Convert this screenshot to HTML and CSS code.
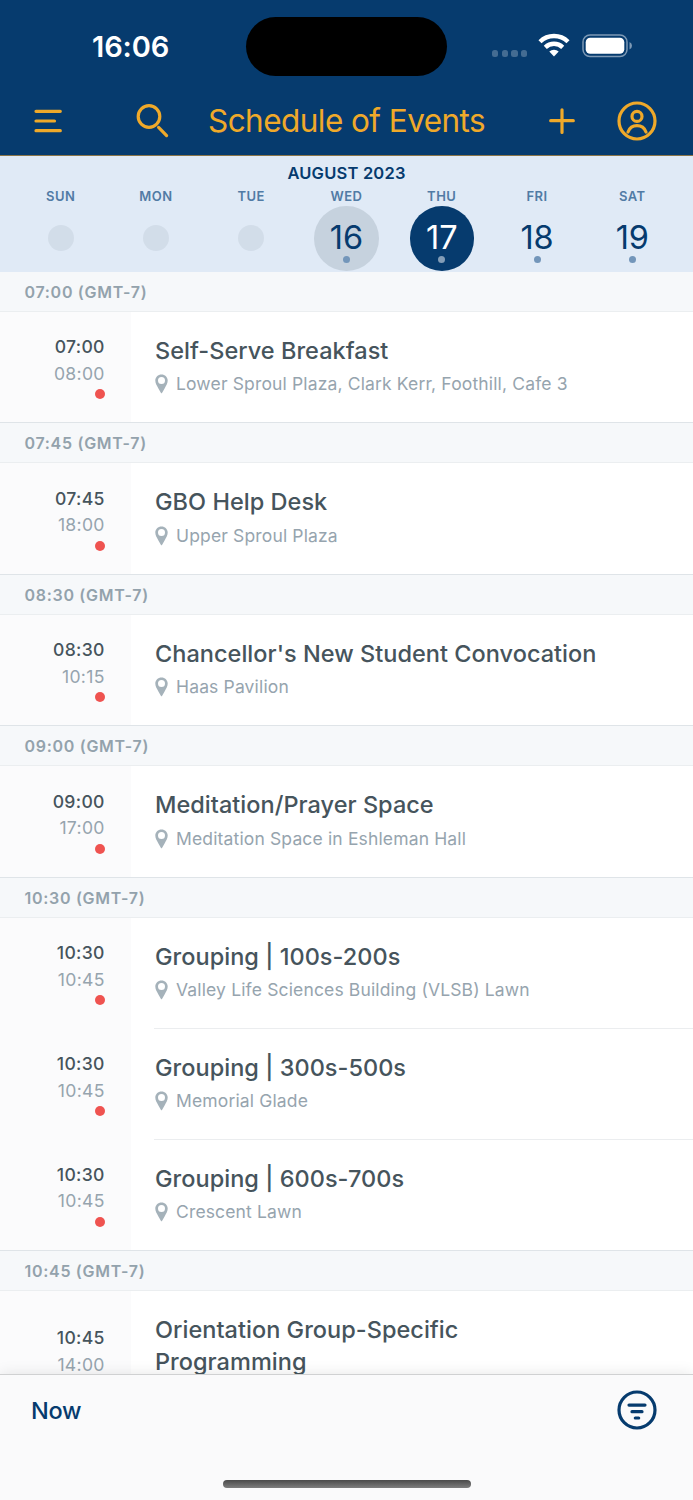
FILE: index.html
```html
<!DOCTYPE html>
<html lang="en">
    <head>
        <meta charset="utf-8">
        <title>Schedule of Events</title>
        <link rel="stylesheet" href="styles.css">
    </head>
    <body>
        <svg class="defs" width="0" height="0">
            <symbol id="pin" viewBox="0 0 14 20">
                <path fill-rule="evenodd" d="M6.500.5C3 .5.300 3.200.300 6.600c0 3 1.500 5 3.100 7.800L6 18.900q.5.600 1 0L9.600 14.400c1.600-2.800 3.100-4.800 3.100-7.800C12.700 3.200 10 .5 6.500.5zM6.500 3a3.500 3.500 0 1 1 0 7a3.500 3.500 0 0 1 0-7z"/>
            </symbol>
        </svg>

        <header id="top">
            <div class="status">
                <span class="clock">16:06</span>
                <span class="island"></span>
                <span class="signal"><i></i><i></i><i></i><i></i></span>
                <svg class="wifi" width="32" height="24" viewBox="0 0 32 24">
                    <g fill="none" stroke="#fff" stroke-width="4.400">
                        <path d="M2 8.700a20 20 0 0 1 28 0"/>
                        <path d="M7.300 14.300a12.500 12.500 0 0 1 17.400 0"/>
                    </g>
                    <path fill="#fff" d="M11.300 18.500a7 7 0 0 1 9.400 0L16 23.400z"/>
                </svg>
                <svg class="battery" width="52" height="24" viewBox="0 0 52 24">
                    <rect x="1" y="1" width="44" height="21.500" rx="7" fill="none" stroke="#7d99b5" stroke-width="1.500"/>
                    <rect x="3.700" y="3.700" width="38.600" height="16" rx="4.500" fill="#fff"/>
                    <path d="M47.500 8v7.500q2.500-1.200 2.500-3.750t-2.500-3.750z" fill="#7d99b5"/>
                </svg>
            </div>
            <nav class="bar">
                <svg class="menu" width="28" height="26" viewBox="0 0 28 26">
                    <path d="M2 3.300h24.300M2 13h18.500M2 22.700h24.300"/>
                </svg>
                <svg class="search" width="34" height="34" viewBox="0 0 34 34">
                    <circle cx="13" cy="12.500" r="10.800"/>
                    <path d="M22.600 23.400l8 8.200"/>
                </svg>
                <h1>Schedule of Events</h1>
                <svg class="plus" width="28" height="28" viewBox="0 0 28 28">
                    <path d="M14 2.800v22.600M2.700 13.700h22.600"/>
                </svg>
                <svg class="user" width="40" height="40" viewBox="0 0 40 40">
                    <circle cx="20" cy="20" r="18"/>
                    <circle cx="20" cy="15.400" r="5"/>
                    <path d="M11 31c1.500-4 5-6.300 9-6.300s7.500 2.300 9 6.300"/>
                </svg>
            </nav>
        </header>

        <section id="calendar">
            <h2>AUGUST 2023</h2>
            <div class="days">
                <div class="day"><b>SUN</b><span class="empty"></span></div>
                <div class="day"><b>MON</b><span class="empty"></span></div>
                <div class="day"><b>TUE</b><span class="empty"></span></div>
                <div class="day"><b>WED</b><span class="num today">16</span></div>
                <div class="day"><b>THU</b><span class="num selected">17</span></div>
                <div class="day"><b>FRI</b><span class="num">18</span></div>
                <div class="day"><b>SAT</b><span class="num">19</span></div>
            </div>
        </section>

        <main id="events">
            <h3>07:00 (GMT-7)</h3>
            <div class="event">
                <div class="time"><b>07:00</b><span>08:00</span><i></i></div>
                <div class="info">
                    <h4>Self-Serve Breakfast</h4>
                    <p><svg width="14" height="20"><use href="#pin"/></svg>Lower Sproul Plaza, Clark Kerr, Foothill, Cafe 3</p>
                </div>
            </div>

            <h3>07:45 (GMT-7)</h3>
            <div class="event">
                <div class="time"><b>07:45</b><span>18:00</span><i></i></div>
                <div class="info">
                    <h4>GBO Help Desk</h4>
                    <p><svg width="14" height="20"><use href="#pin"/></svg>Upper Sproul Plaza</p>
                </div>
            </div>

            <h3>08:30 (GMT-7)</h3>
            <div class="event">
                <div class="time"><b>08:30</b><span>10:15</span><i></i></div>
                <div class="info">
                    <h4>Chancellor's New Student Convocation</h4>
                    <p><svg width="14" height="20"><use href="#pin"/></svg>Haas Pavilion</p>
                </div>
            </div>

            <h3>09:00 (GMT-7)</h3>
            <div class="event">
                <div class="time"><b>09:00</b><span>17:00</span><i></i></div>
                <div class="info">
                    <h4>Meditation/Prayer Space</h4>
                    <p><svg width="14" height="20"><use href="#pin"/></svg>Meditation Space in Eshleman Hall</p>
                </div>
            </div>

            <h3>10:30 (GMT-7)</h3>
            <div class="event">
                <div class="time"><b>10:30</b><span>10:45</span><i></i></div>
                <div class="info">
                    <h4>Grouping | 100s-200s</h4>
                    <p><svg width="14" height="20"><use href="#pin"/></svg>Valley Life Sciences Building (VLSB) Lawn</p>
                </div>
            </div>
            <div class="event">
                <div class="time"><b>10:30</b><span>10:45</span><i></i></div>
                <div class="info">
                    <h4>Grouping | 300s-500s</h4>
                    <p><svg width="14" height="20"><use href="#pin"/></svg>Memorial Glade</p>
                </div>
            </div>
            <div class="event">
                <div class="time"><b>10:30</b><span>10:45</span><i></i></div>
                <div class="info">
                    <h4>Grouping | 600s-700s</h4>
                    <p><svg width="14" height="20"><use href="#pin"/></svg>Crescent Lawn</p>
                </div>
            </div>

            <h3>10:45 (GMT-7)</h3>
            <div class="event tall">
                <div class="time"><b>10:45</b><span>14:00</span></div>
                <div class="info">
                    <h4>Orientation Group-Specific<br>Programming</h4>
                </div>
            </div>
        </main>

        <footer id="bottom">
            <div class="tools">
                <a class="now">Now</a>
                <svg class="filter" width="40" height="40" viewBox="0 0 40 40">
                    <circle cx="20" cy="20" r="18"/>
                    <path d="M12 15.100h16M15 21.700h10M18.300 28h3.400"/>
                </svg>
            </div>
            <div class="home"></div>
        </footer>
    </body>
</html>
```
FILE: styles.css
```css
*{
    box-sizing: border-box;
}
body{
    display: flex;
    flex-direction: column;
    width: 693px;
    height: 1500px;
    margin: 0;
    overflow: hidden;
    background: #FFF;
    font-family: Inter, "Liberation Sans", sans-serif;
}
h1, h2, h3, h4, p{
    margin: 0;
    white-space: nowrap;
}
svg{
    display: block;
    flex: none;
}
.defs{
    position: absolute;
}

/* status bar + title */
#top{
    height: 156px;
    flex: none;
    background: #063B6E;
    border-bottom: 1px solid #8A7548;
}
.status{
    display: flex;
    align-items: flex-start;
    height: 93px;
    padding: 17px 0 0 92px;
    color: #FFF;
}
.clock{
    width: 153.700px;
    padding-top: 12px;
    font-size: 29px;
    line-height: 36px;
    font-weight: 600;
    letter-spacing: -0.1px;
}
.island{
    width: 201.700px;
    height: 59.300px;
    border-radius: 30px;
    background: #000;
}
.signal{
    display: flex;
    gap: 3.500px;
    margin: 33px 0 0 44.600px;
}
.signal i{
    width: 6.200px;
    height: 6.500px;
    border-radius: 2.500px;
    background: #446C92;
}
.wifi{
    margin: 16px 0 0 11.200px;
}
.battery{
    margin: 17px 0 0 11.500px;
}
.bar{
    display: flex;
    align-items: center;
    height: 56px;
    padding: 0 36px 0 34px;
}
.bar svg, .filter{
    fill: none;
    stroke: #EFA92A;
    stroke-width: 3.200;
    stroke-linecap: round;
}
.search{
    margin-left: 74px;
}
.bar h1{
    width: 280px;
    margin-left: 38px;
    font-size: 31.500px;
    line-height: 40px;
    font-weight: 400;
    letter-spacing: -0.550px;
    color: #EFA92A;
}
.plus{
    margin-left: 60px;
}
.user{
    margin-left: 40.500px;
}

/* week strip */
#calendar{
    height: 116px;
    flex: none;
    padding-top: 7px;
    background: #E0EAF6;
    color: #063B6E;
}
#calendar h2{
    font-size: 16.500px;
    line-height: 20px;
    font-weight: 600;
    letter-spacing: 0.200px;
    text-align: center;
}
.days{
    display: flex;
    padding: 4px 13px 0;
}
.day{
    display: flex;
    flex: 1;
    flex-direction: column;
    align-items: center;
}
.day b{
    font-size: 13px;
    line-height: 18px;
    font-weight: 600;
    letter-spacing: 0.5px;
    color: #517BA5;
}
.empty{
    width: 26px;
    height: 26px;
    margin-top: 20px;
    border-radius: 50%;
    background: #D2DDE9;
}
.num{
    display: flex;
    flex-direction: column;
    align-items: center;
    width: 64.500px;
    height: 64.500px;
    margin-top: 1px;
    padding-top: 14px;
    border-radius: 50%;
    font-size: 32.500px;
    line-height: 36px;
}
.num:after{
    content: "";
    width: 7px;
    height: 7px;
    margin-top: -0.5px;
    border-radius: 50%;
    background: #7396BA;
}
.today{
    background: #C6D2DE;
}
.selected{
    background: #063B6E;
    color: #FFF;
}
.selected:after{
    background: #839DB7;
}

/* list */
#events{
    flex: 1;
    min-height: 0;
    overflow: hidden;
}
#events h3{
    height: 40.700px;
    padding-left: 24.500px;
    border-top: 1px solid #DFE4E8;
    border-bottom: 1px solid #EBEEF0;
    background: #F6F8FA;
    font-size: 16px;
    line-height: 41.500px;
    font-weight: 600;
    letter-spacing: 0.700px;
    color: #93A2AC;
}
#events h3:first-child{
    margin-top: -1px;
}
.event{
    display: flex;
    height: 110.800px;
}
.time{
    display: flex;
    flex-direction: column;
    align-items: flex-end;
    width: 131px;
    padding: 22.600px 26.300px 0 0;
    background: #FBFBFC;
    font-size: 17.600px;
    line-height: 26.500px;
    letter-spacing: 0.300px;
    color: #96A4AE;
}
.time b{
    font-weight: 500;
    color: #46545C;
}
.time i{
    width: 10px;
    height: 10px;
    margin-top: 2px;
    border-radius: 50%;
    background: #EF5350;
}
.info{
    flex: 1;
    margin-left: 23px;
    padding: 23.200px 0 0 1px;
}
.event + .event .info{
    border-top: 1px solid #EBEDEF;
    padding-top: 22.700px;
}
.info h4{
    font-size: 23.500px;
    line-height: 32px;
    font-weight: 500;
    letter-spacing: 0.030px;
    color: #46545C;
}
.info p{
    display: flex;
    align-items: center;
    gap: 7px;
    margin-top: 6.300px;
    font-size: 17.500px;
    line-height: 22px;
    letter-spacing: 0.150px;
    color: #96A4AE;
}
.info svg{
    fill: #A5B2BA;
}
.tall .time{
    padding-top: 34.700px;
}

/* bottom bar */
#bottom{
    position: relative;
    height: 126px;
    flex: none;
    border-top: 1px solid #D0D1D2;
    background: #FAFAFB;
    box-shadow: 0 0 14px rgba(0, 0, 0, 0.1);
}
.tools{
    display: flex;
    align-items: center;
    justify-content: space-between;
    height: 70px;
    padding: 0 36.500px 0 31px;
}
.now{
    padding-top: 1px;
    font-size: 23.500px;
    line-height: 30px;
    font-weight: 500;
    letter-spacing: -0.3px;
    color: #063B6E;
}
.filter{
    stroke: #063B6E;
}
.home{
    width: 248px;
    height: 8px;
    margin: 35px auto 0;
    border-radius: 4px;
    background: linear-gradient(#4A4A4A, #7D7D7D);
}
```
